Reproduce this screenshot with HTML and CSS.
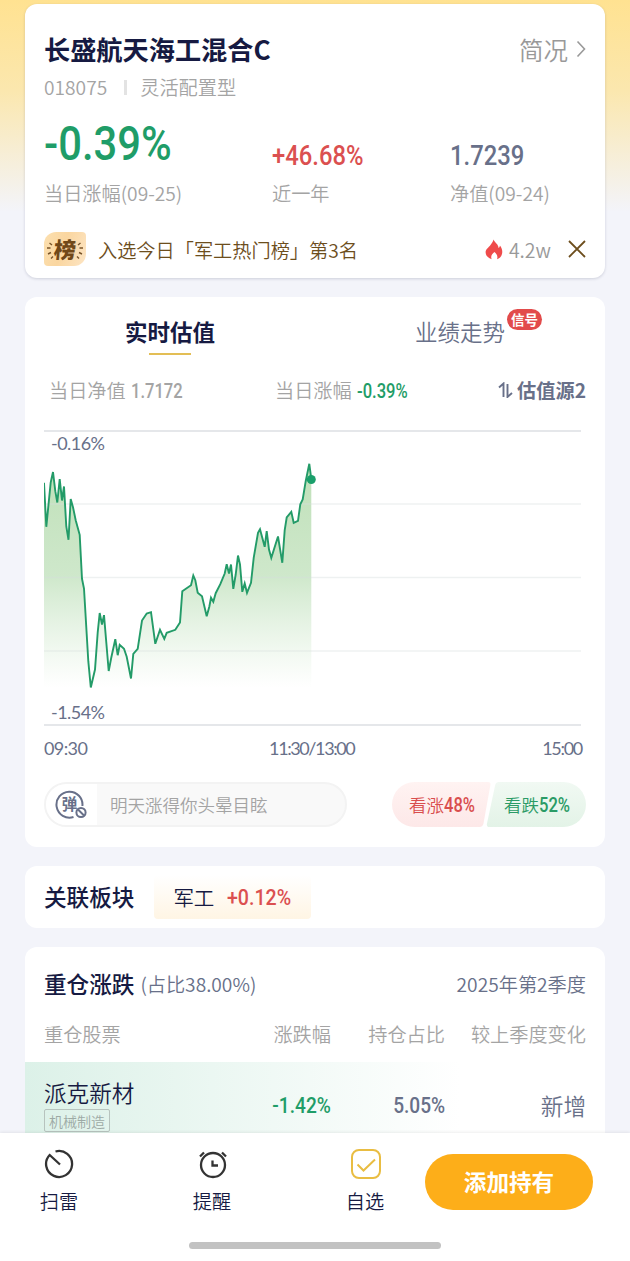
FILE: index.html
```html
<!DOCTYPE html>
<html lang="zh-CN">
<head>
  <meta charset="utf-8">
  <title>长盛航天海工混合C</title>
  <link rel="stylesheet" href="styles.css">
</head>
<body>
  <main class="page">
    <section class="card fund">
      <div class="fund-head">
        <h1>长盛航天海工混合C</h1>
        <a class="more">简况
          <svg width="10" height="18" viewBox="0 0 10 18"><path d="M1.5 1.5L8.5 9l-7 7.5"/></svg>
        </a>
      </div>
      <div class="fund-sub"><span>018075</span><i></i><span>灵活配置型</span></div>
      <div class="stats">
        <div class="stat">
          <div class="value"><b class="num num-xl green">-0.39%</b></div>
          <div class="label">当日涨幅(09-25)</div>
        </div>
        <div class="stat">
          <div class="value"><b class="num num-lg red">+46.68%</b></div>
          <div class="label">近一年</div>
        </div>
        <div class="stat">
          <div class="value"><b class="num num-lg slate">1.7239</b></div>
          <div class="label">净值(09-24)</div>
        </div>
      </div>
      <div class="rank">
        <span class="rank-badge">
          <svg width="42" height="33" viewBox="0 0 42 33"><path d="M5.500 11l2.500 2M3 16h3.500M4 22l3-1.500M7 26.500l2-2M36.500 11l-2.500 2M39 16h-3.500M38 22l-3-1.500M35 26.500l-2-2"/></svg>
          <em>榜</em>
        </span>
        <span class="rank-text">入选今日「军工热门榜」第3名</span>
        <svg class="fire" width="18" height="21" viewBox="0 0 18 21"><path d="M8.500 0.500c1 3 5 4.500 5 8.500 1-.5 1.300-1.500 1.400-2.500 2 2.500 2.600 5 2.300 7.500-.5 3.500-2.700 5.500-5.200 6.200 1-2.500.2-4.700-2.500-7.200-2.800 2-4 4.200-2.900 7.200C3 19 .6 16.500.6 13.300c0-3.300 2.900-4.500 4.900-7.300C7 4 8 2.500 8.500.5z"/></svg>
        <span class="heat">4.2w</span>
        <svg class="close" width="18" height="18" viewBox="0 0 18 18"><path d="M1 1l16 16M17 1L1 17"/></svg>
      </div>
    </section>

    <section class="card trend">
      <div class="tabs">
        <div class="tab active">实时估值</div>
        <div class="tab">业绩走势<span class="signal">信号</span></div>
      </div>
      <div class="quote">
        <span class="quote-nav">当日净值 <b class="num num-sm">1.7172</b></span>
        <span class="quote-chg">当日涨幅 <b class="num num-sm green">-0.39%</b></span>
        <span class="source">
          <svg width="15" height="16" viewBox="0 0 15 16"><path d="M1 5.500l4.500-4V15M14 11l-4.500 4V2"/></svg>估值源2
        </span>
      </div>
      <div class="chart">
        <svg width="538" height="296" viewBox="44 430.500 538 296">
          <defs>
            <linearGradient id="area" gradientUnits="userSpaceOnUse" x1="0" y1="464" x2="0" y2="688">
              <stop offset="0" stop-color="#bfe0b8"/>
              <stop offset="0.500" stop-color="#c9e5c5" stop-opacity="0.900"/>
              <stop offset="1" stop-color="#d4ebd1" stop-opacity="0"/>
            </linearGradient>
          </defs>
          <path class="edge" d="M44 431.500H581M44 725.500H581"/>
          <path fill="url(#area)" d="M44 483.300L46.300 527.300 50.700 483 53 472.500 55.300 491.700 57.300 503 59.700 479.500 62 501 64 487 66.300 527 68.500 540.300 70.700 499.500 73 507.700 75.700 520.700 79.700 535.300 82 579.300 84 589 88.300 661.700 90.800 688 95 670 97.700 633 99.700 613.500 102 625 104 615.700 106.300 643 108.700 671.500 111.300 658 115.300 639.700 117.700 655.700 119.700 645.300 124 649.300 126.700 657.300 131 679 133.300 654.300 137.700 649.300 142 621 146.700 614 151 612.700 155.300 644.300 160 630.300 164.300 639.300 166.700 633.300 175.300 630.300 180 623 182.300 591.700 191 585.700 193.300 576 195.300 580.700 197.700 593.300 202 596.700 206.700 616.700 209.300 607.300 211 598.300 213.300 602.300 215.700 593.700 220.300 584.700 224.700 574 226.700 564.700 229 574 231 565 233.300 589.300 235.700 575 238 556 240 565 242.300 592.300 244.700 584 247 593.300 251 583.300 253.700 558.300 258 533.300 260 529.700 264.700 547.300 266.700 531.700 269 550 271.300 558.300 278 537 282.300 563.300 284.700 530.700 286.700 518 291.300 512.300 293.700 523.300 298 521.300 300.300 504.700 302.700 500 305.700 481.700 309.300 464.300 311.300 479.500V688H44z"/>
          <path class="grid" d="M44 504.500H581M44 578H581M44 651.500H581"/>
          <polyline class="line" points="44,483.300 46.300,527.300 50.700,483 53,472.500 55.300,491.700 57.300,503 59.700,479.500 62,501 64,487 66.300,527 68.500,540.300 70.700,499.500 73,507.700 75.700,520.700 79.700,535.300 82,579.300 84,589 88.300,661.700 90.800,688 95,670 97.700,633 99.700,613.500 102,625 104,615.700 106.300,643 108.700,671.500 111.300,658 115.300,639.700 117.700,655.700 119.700,645.300 124,649.300 126.700,657.300 131,679 133.300,654.300 137.700,649.300 142,621 146.700,614 151,612.700 155.300,644.300 160,630.300 164.300,639.300 166.700,633.300 175.300,630.300 180,623 182.300,591.700 191,585.700 193.300,576 195.300,580.700 197.700,593.300 202,596.700 206.700,616.700 209.300,607.300 211,598.300 213.300,602.300 215.700,593.700 220.300,584.700 224.700,574 226.700,564.700 229,574 231,565 233.300,589.300 235.700,575 238,556 240,565 242.300,592.300 244.700,584 247,593.300 251,583.300 253.700,558.300 258,533.300 260,529.700 264.700,547.300 266.700,531.700 269,550 271.300,558.300 278,537 282.300,563.300 284.700,530.700 286.700,518 291.300,512.300 293.700,523.300 298,521.300 300.300,504.700 302.700,500 305.700,481.700 309.300,464.300 311.300,479.500"/>
          <circle cx="311.300" cy="480" r="4.500" fill="#1a9f6b"/>
          <text x="51" y="450" textLength="54">-0.16%</text>
          <text x="51" y="719.500" textLength="54">-1.54%</text>
        </svg>
      </div>
      <div class="axis"><span>09:30</span><span class="noon">11:30/13:00</span><span class="end">15:00</span></div>
      <div class="talk">
        <div class="danmu">
          <div class="danmu-toggle">
            <svg width="32" height="30" viewBox="0 0 32 30">
              <path d="M18.500 27A13 13 0 1 1 27.400 16"/>
              <circle cx="26" cy="22.500" r="4.600"/><path d="M23 19.500l6 6"/>
              <text x="14.500" y="20">弹</text>
            </svg>
          </div>
          <span>明天涨得你头晕目眩</span>
        </div>
        <div class="vote">
          <svg class="vote-bg" width="194" height="45" viewBox="0 0 194 45">
            <defs>
              <linearGradient id="up" x1="0" y1="0" x2="0" y2="1"><stop offset="0" stop-color="#fff3f2"/><stop offset="1" stop-color="#fde8e8"/></linearGradient>
              <linearGradient id="down" x1="0" y1="0" x2="0" y2="1"><stop offset="0" stop-color="#f1f9f3"/><stop offset="1" stop-color="#e3f3e7"/></linearGradient>
            </defs>
            <path fill="url(#up)" d="M22.500 0H96q3 0 2.400 3L91.500 41.500q-.8 3.500-4 3.500H22.500a22.500 22.500 0 0 1 0-45z"/>
            <path fill="url(#down)" d="M171.500 0H107q-3 0-3.800 3L95 41.500q-.7 3.500 2.500 3.500h74a22.500 22.500 0 0 0 0-45z"/>
          </svg>
          <span class="vote-up">看涨<b class="num num-sm">48%</b></span>
          <span class="vote-down">看跌<b class="num num-sm">52%</b></span>
        </div>
      </div>
    </section>

    <section class="card sector">
      <h2>关联板块</h2>
      <div class="sector-tag">军工<b class="num num-md red">+0.12%</b></div>
    </section>

    <section class="card holdings">
      <div class="holdings-head">
        <h2>重仓涨跌</h2><span>(占比38.00%)</span><span class="quarter">2025年第2季度</span>
      </div>
      <div class="row row-head">
        <span>重仓股票</span><span>涨跌幅</span><span>持仓占比</span><span>较上季度变化</span>
      </div>
      <div class="row row-stock">
        <div class="stock"><div>派克新材</div><small>机械制造</small></div>
        <span><b class="num num-md green">-1.42%</b></span>
        <span><b class="num num-md slate">5.05%</b></span>
        <span class="change">新增</span>
      </div>
    </section>
  </main>

  <nav class="bottom">
    <div class="actions">
      <div class="action">
        <svg width="30" height="30" viewBox="0 0 30 30"><path d="M11.500 2.500A13 13 0 1 1 5.700 6L16 15.500"/></svg>
        <span>扫雷</span>
      </div>
      <div class="action">
        <svg width="30" height="30" viewBox="0 0 30 30"><circle cx="16" cy="16" r="12"/><path d="M15.500 11.500v5h5.500M3 7.500l4-4M29 7.500l-4-4"/></svg>
        <span>提醒</span>
      </div>
      <div class="action picked">
        <svg width="30" height="30" viewBox="0 0 30 30"><rect x="1" y="1" width="28" height="28" rx="7"/><path d="M6.500 15.500l6 6L24 10.500"/></svg>
        <span>自选</span>
      </div>
      <button class="add">添加持有</button>
    </div>
    <div class="home-bar"></div>
  </nav>
</body>
</html>
```
FILE: styles.css
```css
* {
  box-sizing: border-box;
}

body {
  margin: 0;
  width: 630px;
  height: 1261px;
  overflow: hidden;
  display: flex;
  flex-direction: column;
  font-family: "Noto Sans CJK SC", sans-serif;
  font-size: 19.200px;
  font-weight: 350;
  color: #161a42;
  background: #f3f4fa linear-gradient(#ffe291, #fbe7ae 90px, #f3f4fa 212px) no-repeat;
}

svg {
  display: block;
  flex: none;
  fill: none;
}

h1,
h2 {
  margin: 0;
  font-weight: 500;
}

h2 {
  font-size: 22.600px;
  line-height: 32px;
}

.page {
  flex: 1;
  min-height: 0;
  overflow: hidden;
  padding: 4px 25px 0;
  display: flex;
  flex-direction: column;
  gap: 19px;
}

.card {
  flex: none;
  background: #fff;
  border-radius: 12px;
  padding: 0 19px;
}

/* condensed figures */
.num {
  display: inline-block;
  font-family: Roboto, sans-serif;
  font-weight: 500;
  transform: scaleX(0.85);
  transform-origin: left;
}

.num-xl { font-size: 48.500px; }
.num-lg { font-size: 28px; }
.num-md { font-size: 22.500px; }
.num-sm { font-size: 19.500px; }

.green { color: #1f9d68; }
.red { color: #db5050; }
.slate { color: #687089; }

/* fund summary */
.fund {
  height: 274px;
  box-shadow: 0 1px 3px rgba(60, 65, 100, 0.2);
}

.fund-head {
  display: flex;
  justify-content: space-between;
  align-items: center;
  height: 38px;
  margin-top: 26px;
}

h1 {
  font-size: 26.200px;
  font-weight: 700;
  line-height: 38px;
}

.more {
  display: flex;
  align-items: center;
  gap: 8px;
  font-size: 24.500px;
  color: #999;
}

.more svg {
  stroke: #999;
  stroke-width: 1.6;
}

.fund-sub {
  display: flex;
  align-items: center;
  height: 28px;
  margin-top: 5px;
  color: #a4a4a4;
}

.fund-sub i {
  width: 3px;
  height: 15px;
  margin: 0 13px 0 17px;
  background: #e3e3e3;
}

.stats {
  display: flex;
}

.stat {
  flex: none;
  width: 228px;
}

.stat + .stat {
  width: 178px;
}

.value {
  height: 76px;
  display: flex;
  align-items: flex-end;
}

.value .num {
  line-height: 32px;
  margin-bottom: 5px;
}

.value .num-xl {
  line-height: 56px;
  margin-bottom: 5px;
  transform: scaleX(0.86);
}

.label {
  line-height: 32px;
  color: #a4a4a4;
  white-space: nowrap;
}

.rank {
  display: flex;
  align-items: center;
  height: 36px;
  margin-top: 22px;
  color: #6d4e1d;
}

.rank-badge {
  position: relative;
  width: 42px;
  height: 34px;
  border-radius: 12px 4px 12px 4px;
  background: linear-gradient(110deg, #fce0b0, #fad6a0 45%, #fde5c4);
}

.rank-badge svg {
  stroke: #79542a;
  stroke-width: 1.4;
}

.rank-badge em {
  position: absolute;
  left: 10px;
  top: 0;
  font-size: 22px;
  font-style: normal;
  font-weight: 900;
  line-height: 32px;
  color: #714818;
  transform: skewX(-5deg);
}

.rank-text {
  margin-top: 2px;
  margin-left: 12px;
}

.fire {
  margin-left: auto;
  fill: #ef4b4b;
}

.heat {
  margin-left: 6px;
  color: #999;
  font-size: 19.500px;
}

.close {
  margin-left: 17px;
  stroke: #6d4e1d;
  stroke-width: 1.8;
}

/* estimate chart */
.trend {
  height: 550px;
}

.tabs {
  display: flex;
  height: 62px;
  padding-top: 18px;
  font-size: 22.500px;
  line-height: 32px;
}

.tab {
  position: relative;
  margin-left: 200px;
  color: #687089;
}

.tab.active {
  margin-left: 81px;
  color: #161a42;
  font-weight: 700;
}

.tab.active::after {
  content: "";
  position: absolute;
  left: 24px;
  top: 38px;
  width: 42px;
  height: 2px;
  background: #e3be55;
}

.signal {
  position: absolute;
  left: 92px;
  top: -6px;
  width: 35px;
  height: 21px;
  border-radius: 11px;
  background: #e24b4b;
  color: #fff;
  font-size: 13.500px;
  font-weight: 700;
  line-height: 20px;
  text-align: center;
}

.quote {
  display: flex;
  align-items: center;
  height: 30px;
  margin-top: 16px;
  padding-left: 5px;
  color: #a4a4a4;
}

.quote-nav {
  width: 226px;
}

.quote .num {
  margin-left: 1px;
}

.source {
  display: flex;
  align-items: center;
  gap: 4px;
  margin-left: auto;
  color: #687089;
  font-weight: 700;
}

.source svg {
  stroke: #687089;
  stroke-width: 1.9;
}

.chart {
  margin-top: 25px;
}

.edge {
  stroke: #e5e7ea;
  stroke-width: 2;
}

.grid {
  stroke: #d5dcdc;
  stroke-opacity: 0.4;
  stroke-width: 1.5;
}

.line {
  stroke: #239b68;
  stroke-width: 1.9;
}

.chart text {
  font-family: Lato, sans-serif;
  font-size: 18px;
  font-weight: 400;
  fill: #687089;
}

.axis {
  display: flex;
  justify-content: space-between;
  height: 43px;
  padding-right: 4px;
  font-family: Lato, sans-serif;
  font-size: 18px;
  font-weight: 400;
  line-height: 44px;
  letter-spacing: -0.6px;
  color: #687089;
}

.axis .noon {
  margin-right: 6px;
  letter-spacing: -1.4px;
}

.axis .end {
  letter-spacing: -1.3px;
}

.talk {
  display: flex;
  justify-content: space-between;
  margin-top: 13px;
}

.danmu {
  display: flex;
  align-items: center;
  width: 303px;
  height: 45px;
  border: 2px solid #f3f3f3;
  border-radius: 23px;
  background: #f9f9f9;
  color: #a4a4a4;
  font-size: 17.500px;
  overflow: hidden;
}

.danmu-toggle {
  width: 51px;
  height: 41px;
  margin-right: 13px;
  padding: 6px 0 0 9px;
  background: #fff;
}

.danmu-toggle svg {
  stroke: #687089;
  stroke-width: 2;
}

.danmu-toggle text {
  font-size: 15.500px;
  font-weight: 700;
  text-anchor: middle;
  fill: #687089;
  stroke: none;
}

.vote {
  position: relative;
  display: flex;
  width: 194px;
  height: 45px;
  font-size: 17.500px;
  line-height: 45px;
}

.vote-bg {
  position: absolute;
  left: 0;
  top: 0;
}

.vote span {
  position: relative;
  width: 95px;
  padding-left: 17px;
  white-space: nowrap;
}

.vote-up { color: #d94d4d; }
.vote-down { color: #2a9b66; }

/* related sector */
.sector {
  display: flex;
  align-items: center;
  height: 62px;
}

.sector-tag {
  display: flex;
  align-items: center;
  gap: 13px;
  width: 157px;
  height: 44px;
  margin-left: 20px;
  padding-left: 19px;
  border-radius: 4px;
  background: linear-gradient(#fff, #fff5e4);
  font-size: 20.500px;
}

.sector-tag .num {
  transform: scaleX(0.87);
}

/* top holdings */
.holdings {
  height: 300px;
}

.holdings-head {
  display: flex;
  align-items: center;
  height: 73px;
  color: #687089;
}

.holdings-head h2 {
  margin-right: 6px;
  color: #161a42;
}

.holdings-head .quarter {
  margin-left: auto;
}

.row {
  display: grid;
  grid-template-columns: 167px 120px 114px 141px;
  text-align: right;
}

.row > :first-child {
  text-align: left;
}

.row-head {
  height: 42px;
  line-height: 28px;
  color: #a4a4a4;
}

.row-stock {
  height: 100px;
  margin: 0 -19px;
  padding: 15px 19px 0;
  background: linear-gradient(90deg, #dcf1e8, #fff 75%);
}

.row-stock .num {
  margin-top: 15px;
  transform-origin: right;
}

.stock {
  font-size: 22.600px;
  line-height: 32px;
}

.stock small {
  display: inline-block;
  height: 23px;
  padding: 0 4px;
  border: 1px solid #b7c3be;
  border-radius: 2px;
  color: #9daaa5;
  font-size: 14px;
  line-height: 22px;
  vertical-align: top;
}

.change {
  padding-top: 13px;
  font-size: 22.600px;
  line-height: 32px;
  color: #687089;
}

/* bottom bar */
.bottom {
  position: relative;
  flex: none;
  height: 128px;
  background: #fff;
  box-shadow: 0 -1px 3px rgba(0, 0, 0, 0.07);
}

.actions {
  display: flex;
  height: 77px;
  padding-left: 40px;
}

.action {
  width: 38px;
  margin-right: 115px;
  padding-top: 16px;
  display: flex;
  flex-direction: column;
  align-items: center;
  gap: 8px;
  line-height: 28px;
  white-space: nowrap;
}

.action svg {
  stroke: #333;
  stroke-width: 2.3;
}

.action.picked {
  margin-right: 41px;
}

.action.picked svg {
  margin-left: 2px;
  stroke: #e9bd42;
  stroke-width: 2;
}

.add {
  width: 168px;
  height: 56px;
  margin-top: 20.500px;
  padding-bottom: 2px;
  border: 0;
  border-radius: 28px;
  background: #fdae19;
  color: #fff;
  font-family: inherit;
  font-size: 22.600px;
  font-weight: 700;
}

.home-bar {
  width: 252px;
  height: 7px;
  margin: 32px 0 0 189px;
  border-radius: 4px;
  background: #c2c2c2;
}
```
